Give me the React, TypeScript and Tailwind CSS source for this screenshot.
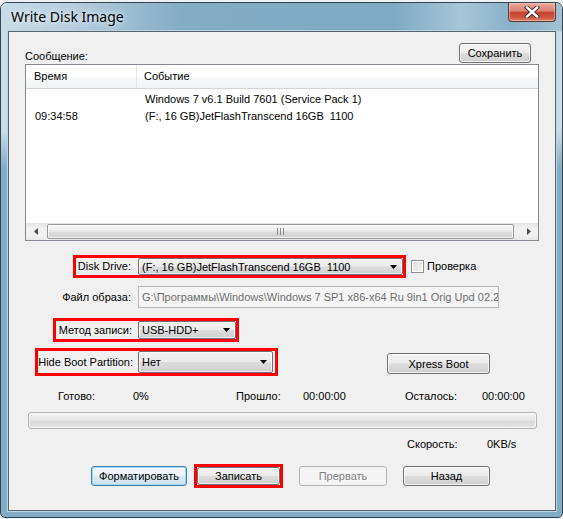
import React from "react";

const btnBg =
  "bg-[linear-gradient(180deg,#f3f3f3_0%,#ebebeb_48%,#dddddd_52%,#cfcfcf_100%)]";

function Btn({
  children,
  className = "",
  focused = false,
  disabled = false,
}: {
  children: React.ReactNode;
  className?: string;
  focused?: boolean;
  disabled?: boolean;
}) {
  let look = `border-[#707070] ${btnBg} shadow-[inset_0_0_0_1px_rgba(255,255,255,0.75)] text-black`;
  if (focused)
    look = `border-[#3c7fb1] bg-[linear-gradient(180deg,#f4f9fc_0%,#eaf3f9_48%,#dbe9f3_52%,#cde0ee_100%)] shadow-[inset_0_0_0_1px_#9ed6f3] text-black`;
  if (disabled) look = "border-[#adb2b5] bg-[#f4f4f4] text-[#838383]";
  return (
    <div
      className={`flex items-center justify-center rounded-[3px] border leading-[14px] whitespace-nowrap ${look} ${className}`}
    >
      {children}
    </div>
  );
}

function Arrow() {
  return (
    <svg width="7" height="4" viewBox="0 0 7 4" className="shrink-0">
      <path d="M0 0H7L3.5 4Z" fill="#000" />
    </svg>
  );
}

function Combo({ text, className = "" }: { text: string; className?: string }) {
  return (
    <div
      className={`flex items-center rounded-[2px] border border-[#707070] ${btnBg} shadow-[inset_0_0_0_1px_rgba(255,255,255,0.7)] pl-[3px] pr-[5px] ${className}`}
    >
      <span className="flex-1 whitespace-pre leading-[14px]">{text}</span>
      <Arrow />
    </div>
  );
}

export default function App() {
  return (
    <div className="w-[563px] h-[519px] bg-[#eef1f3] pt-[2px] font-['Liberation_Sans',Arial,sans-serif] text-[11px] text-black">
      <div className="h-[516px] flex flex-col rounded-t-[7px] rounded-b-[5px] border border-[#34454f] bg-[linear-gradient(180deg,#c9dce8_0px,#c9dce8_128px,#82acc6_165px,#82acc6_100%)] overflow-hidden">
        {/* Title bar */}
        <div className="h-[28px] shrink-0 flex bg-[linear-gradient(90deg,#c7dbe8_0%,#b3cbdc_14%,#83adc5_32%,#7eaac3_70%,#a7c5d8_82%,#88b0c8_91%,#a2c1d4_100%)]">
          <div className="pl-[10px] flex items-center font-['Noto_Sans',Arial,sans-serif] text-[14px] leading-[18px] text-black [text-shadow:0_0_8px_#e8f1f7,0_0_4px_#e8f1f7]">
            Write Disk Image
          </div>
          <div className="ml-auto mr-[6px] w-[48px] h-[19px] rounded-b-[4px] border border-t-0 border-[#5a3a36] bg-[linear-gradient(180deg,#e8a99b_0%,#da8172_45%,#c6432e_52%,#cd5641_80%,#dc866f_100%)] shadow-[inset_0_0_0_1px_rgba(255,220,210,0.45)] flex items-center justify-center">
            <svg width="16" height="12" viewBox="0 0 16 12">
              <path
                d="M3 1.5L13 10.5M13 1.5L3 10.5"
                stroke="#3a2a2a"
                strokeWidth="4.2"
                strokeLinecap="square"
              />
              <path
                d="M3 1.5L13 10.5M13 1.5L3 10.5"
                stroke="#ffffff"
                strokeWidth="2.4"
                strokeLinecap="square"
              />
            </svg>
          </div>
        </div>

        {/* Client area */}
        <div className="ml-[7px] mr-[6px] mb-[6px] flex-1 flex flex-col border border-[#55656f] bg-[#f0f0f0] shadow-[0_0_0_1px_#bcd5e4]">
          {/* Row 1 */}
          <div className="mt-[11px] flex items-end justify-between pl-[16px] pr-[24px]">
            <span className="leading-[14px]">Сообщение:</span>
            <Btn className="w-[72px] h-[20px]">Сохранить</Btn>
          </div>

          {/* List view */}
          <div className="ml-[16px] mt-[1px] w-[514px] h-[177px] border border-[#828790] bg-white flex flex-col">
            <div className="h-[24px] shrink-0 flex border-b border-[#d5d5d5] bg-[linear-gradient(180deg,#ffffff_0%,#ffffff_50%,#f6f7f8_60%,#f2f3f5_100%)]">
              <div className="w-[111px] border-r border-[#e3e4e6] pl-[8px] flex items-center">
                Время
              </div>
              <div className="flex-1 pl-[7px] flex items-center">Событие</div>
            </div>
            <div className="pt-[2px] flex-1">
              <div className="h-[17px] flex items-center">
                <div className="w-[112px] pl-[9px]"></div>
                <div className="pl-[7px]">Windows 7 v6.1 Build 7601 (Service Pack 1)</div>
              </div>
              <div className="h-[17px] flex items-center">
                <div className="w-[112px] pl-[9px]">09:34:58</div>
                <div className="pl-[7px] whitespace-pre">(F:, 16 GB)JetFlashTranscend 16GB  1100</div>
              </div>
            </div>
            {/* Horizontal scrollbar */}
            <div className="h-[17px] shrink-0 flex bg-[linear-gradient(180deg,#e3e3e3_0%,#f1f1f1_30%,#f1f1f1_70%,#e8e8e8_100%)]">
              <div className="w-[20px] flex items-center justify-center">
                <svg width="4" height="7" viewBox="0 0 4 7">
                  <path d="M4 0V7L0 3.5Z" fill="#4d4d4d" />
                </svg>
              </div>
              <div className="flex-1 my-[1px] ml-[1px] mr-[1px] rounded-[2px] border border-[#979797] bg-[linear-gradient(180deg,#f7f7f7_0%,#ececec_45%,#dcdcdc_55%,#d2d2d2_100%)] shadow-[inset_0_0_0_1px_rgba(255,255,255,0.7)] flex items-center justify-center">
                <svg width="7" height="7" viewBox="0 0 7 7">
                  <path d="M0.5 0V7M3.5 0V7M6.5 0V7" stroke="#8a8a8a" strokeWidth="1" />
                </svg>
              </div>
              <div className="w-[23px] flex items-center justify-center pl-[4px]">
                <svg width="4" height="7" viewBox="0 0 4 7">
                  <path d="M0 0V7L4 3.5Z" fill="#4d4d4d" />
                </svg>
              </div>
            </div>
          </div>

          {/* Disk drive row */}
          <div className="mt-[14px] flex items-center">
            <div className="ml-[64px] w-[333px] h-[23px] border-[3px] border-[#ff0000] flex items-stretch">
              <div className="w-[62px] pr-[7px] flex items-center justify-end whitespace-nowrap">Disk Drive:</div>
              <Combo className="flex-1" text="(F:, 16 GB)JetFlashTranscend 16GB  1100" />
            </div>
            <div className="ml-[5px] w-[13px] h-[13px] border border-[#8e8f8f] bg-[linear-gradient(135deg,#dcdcdc_0%,#f6f6f6_100%)] shadow-[inset_0_0_0_1px_#ffffff] -mt-[1px]"></div>
            <span className="ml-[3px] leading-[14px] -mt-[1px]">Проверка</span>
          </div>

          {/* Image file row */}
          <div className="mt-[8px] flex items-center h-[22px]">
            <div className="w-[129px] pr-[7px] text-right whitespace-nowrap">Файл образа:</div>
            <div className="w-[361px] h-[22px] border border-[#b5b8bb] bg-[#f5f5f5] flex items-center pl-[3px] overflow-hidden whitespace-pre text-[#6d6d6d]">
              G:\Программы\Windows\Windows 7 SP1 x86-x64 Ru 9in1 Orig Upd 02.2
            </div>
          </div>

          {/* Write method row */}
          <div className="mt-[10px] flex">
            <div className="ml-[44px] w-[186px] h-[24px] border-[3px] border-[#ff0000] flex items-stretch">
              <div className="w-[82px] pr-[6px] flex items-center justify-end whitespace-nowrap">Метод записи:</div>
              <Combo className="w-[98px]" text="USB-HDD+" />
            </div>
          </div>

          {/* Hide boot partition row */}
          <div className="mt-[6px] flex items-start">
            <div className="ml-[26px] w-[243px] h-[28px] border-[3px] border-[#ff0000] flex items-stretch">
              <div className="w-[100px] shrink-0 pr-[5px] flex items-center justify-end whitespace-nowrap">Hide Boot Partition:</div>
              <Combo className="w-[135px]" text="Нет" />
            </div>
            <Btn className="ml-[109px] mt-[5px] w-[103px] h-[21px]">Xpress Boot</Btn>
          </div>

          {/* Status row */}
          <div className="mt-[13px] flex leading-[14px] pl-[49px]">
            <span className="w-[75px]">Готово:</span>
            <span className="w-[103px]">0%</span>
            <span className="w-[67px]">Прошло:</span>
            <span className="w-[102px]">00:00:00</span>
            <span className="w-[77px]">Осталось:</span>
            <span>00:00:00</span>
          </div>

          {/* Progress bar */}
          <div className="mt-[9px] ml-[19px] w-[509px] h-[17px] rounded-[3px] border border-[#b2b2b2] bg-[linear-gradient(180deg,#f3f3f3_0%,#e8e8e8_40%,#d9d9d9_60%,#e4e4e4_100%)] shadow-[inset_0_0_0_1px_rgba(255,255,255,0.6)]"></div>

          {/* Speed row */}
          <div className="mt-[8px] flex leading-[14px] pl-[398px]">
            <span className="w-[80px]">Скорость:</span>
            <span>0KB/s</span>
          </div>

          {/* Buttons row */}
          <div className="mt-[13px] flex items-center">
            <Btn focused className="ml-[82px] w-[96px] h-[20px]">Форматировать</Btn>
            <div className="ml-[7px] w-[89px] h-[24px] border-[3px] border-[#ff0000] flex">
              <Btn className="flex-1 rounded-[1px]">Записать</Btn>
            </div>
            <Btn disabled className="ml-[16px] w-[88px] h-[20px]">Прервать</Btn>
            <Btn className="ml-[16px] w-[87px] h-[20px]">Назад</Btn>
          </div>
        </div>
      </div>
    </div>
  );
}
